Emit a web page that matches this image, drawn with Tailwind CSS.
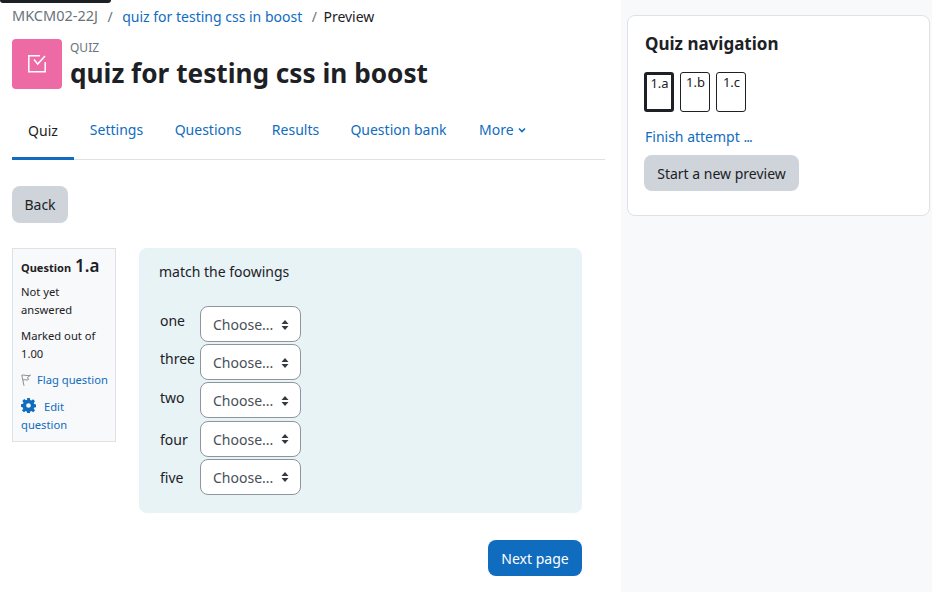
<!DOCTYPE html>
<html lang="en">
<head>
    <meta charset="UTF-8">
    <title>quiz for testing css in boost</title>
    <script src="https://cdn.jsdelivr.net/npm/@tailwindcss/browser@4"></script>
</head>

<body class="bg-white font-['Noto_Sans',sans-serif] text-[14px] text-[#1d2125] h-[592px] w-[932px] overflow-hidden flex relative">
    <div class="absolute left-0 top-0 w-[111px] h-[3px] bg-[#1d2125] rounded-b-[3px]"></div>

    <!-- Main column -->
    <div class="w-[621px] h-full pl-3 pr-4 flex flex-col shrink-0">
        <div class="h-[32px] mb-[2px] flex items-center gap-[9.500px]">
            <span class="text-[#6a737b] text-[14.5px]">MKCM02-22J</span>
            <span class="text-[#6a737b]">/</span>
            <a class="text-[#0f6cbf]">quiz for testing css in boost</a>
            <span class="text-[#6a737b]">/</span>
            <span class="-ml-[3px]">Preview</span>
        </div>

        <div class="flex gap-2 h-[50px] mt-[5px]">
            <div class="w-[50px] h-[50px] rounded-[4px] bg-[#ee6aa5] flex items-center justify-center">
                <svg class="w-[18px] h-[18px]" viewBox="0 0 18 18" fill="none" stroke="white" stroke-width="1.5">
                    <path d="M17.200 7V16.800H.8V.8H12" />
                    <path d="M6 4.500l3.700 4.500L17 1" />
                </svg>
            </div>
            <div class="mt-[2px]">
                <div class="text-[12px] leading-[14px] text-[#6a737b]">QUIZ</div>
                <h1 class="text-[26.200px] leading-[36px] font-bold whitespace-nowrap">quiz for testing css in boost</h1>
            </div>
        </div>

        <!-- Tabs -->
        <nav class="flex h-[56px] mt-[15px] border-b border-[#dee2e6] text-[#0f6cbf]">
            <a class="h-[56px] w-[62px] flex items-center justify-center text-[#1d2125] border-b-[3px] border-[#0f6cbf] pb-px">Quiz</a>
            <a class="h-[55px] w-[85px] pb-[4px] flex items-center justify-center">Settings</a>
            <a class="h-[55px] w-[98px] pb-[4px] flex items-center justify-center">Questions</a>
            <a class="h-[55px] w-[77px] pb-[4px] flex items-center justify-center">Results</a>
            <a class="h-[55px] w-[129px] pb-[4px] flex items-center justify-center">Question bank</a>
            <a class="h-[55px] ml-[16px] pb-[4px] flex items-center gap-1">More
                <svg class="w-2 h-2" viewBox="0 0 8 8" fill="none" stroke="#0f6cbf" stroke-width="1.6"><path d="M1 2.500l3 3 3-3" /></svg>
            </a>
        </nav>

        <button class="mt-[26px] w-[56px] h-[37px] rounded-lg bg-[#ced4da] self-start">Back</button>

        <div class="flex mt-[25px]">
            <!-- Question info -->
            <div class="w-[104px] h-[194px] shrink-0 bg-[#f8f9fa] border border-[#dee2e6] px-2 pt-2 text-[11.200px] leading-[17.500px]">
                <div class="font-bold text-[11px] flex items-baseline gap-1 h-[24px]">Question <span class="text-[17px] font-semibold">1.a</span></div>
                <div class="mt-[2px]">Not yet answered</div>
                <div class="mt-[9px]">Marked out of 1.00</div>
                <div class="mt-[9px] flex items-center gap-[6px] text-[#0f6cbf] whitespace-nowrap">
                    <svg class="w-[10px] h-[12px] shrink-0" viewBox="0 0 10 12" fill="none" stroke="#8a8f94" stroke-width="1"><path d="M3 11.800L.8 1.200C3.500 .5 6 2.500 9.500 1.200L6.500 3.500 7.500 5.500C5.500 6.800 3.800 5 1.800 6" /></svg>
                    Flag question
                </div>
                <div class="mt-[9px] leading-[18px] text-[#0f6cbf]">
                    <svg class="inline-block w-[15px] h-[15px] mr-2 align-[-2px]" viewBox="0 0 16 16" fill="#0f6cbf">
                        <path fill-rule="evenodd" d="M6.600 0h2.800l.4 2.200 1.200.5 1.900-1.300 2 2-1.300 1.900.5 1.200 2.200.4v2.800l-2.200.4-.5 1.200 1.300 1.900-2 2-1.900-1.300-1.200.5-.4 2.200H6.600l-.4-2.200-1.200-.5-1.900 1.300-2-2 1.300-1.900-.5-1.200L0 9.400V6.600l2.200-.4.5-1.200L1.400 3.100l2-2 1.900 1.300 1.200-.5zM8 5.500a2.500 2.500 0 1 0 0 5 2.500 2.500 0 0 0 0-5z" />
                    </svg>Edit question
                </div>
            </div>

            <!-- Question body -->
            <div class="ml-[23px] w-[443px] h-[265px] bg-[#e7f3f5] rounded-lg pl-5 pt-[14px]">
                <p class="leading-5">match the foowings</p>
                <div class="mt-[24px] flex flex-col gap-[2.200px]">
                    <div class="flex h-[36px]"><span class="w-[41px] pl-px pt-[4px]">one</span>
                        <div class="w-[101px] h-[36px] bg-white border border-[#8f959e] rounded-lg flex items-center pl-3 pt-px gap-[8px] text-[#495057]">Choose...<svg class="w-2 h-[10px]" viewBox="0 0 8 10" fill="#343a40"><path d="M4 0l3.500 4H.5zM4 10L.5 6h7z" /></svg></div>
                    </div>
                    <div class="flex h-[36px]"><span class="w-[41px] pl-px pt-[4px]">three</span>
                        <div class="w-[101px] h-[36px] bg-white border border-[#8f959e] rounded-lg flex items-center pl-3 pt-px gap-[8px] text-[#495057]">Choose...<svg class="w-2 h-[10px]" viewBox="0 0 8 10" fill="#343a40"><path d="M4 0l3.500 4H.5zM4 10L.5 6h7z" /></svg></div>
                    </div>
                    <div class="flex h-[36px]"><span class="w-[41px] pl-px pt-[5px]">two</span>
                        <div class="w-[101px] h-[36px] bg-white border border-[#8f959e] rounded-lg flex items-center pl-3 pt-px gap-[8px] text-[#495057]">Choose...<svg class="w-2 h-[10px]" viewBox="0 0 8 10" fill="#343a40"><path d="M4 0l3.500 4H.5zM4 10L.5 6h7z" /></svg></div>
                    </div>
                    <div class="flex h-[36px]"><span class="w-[41px] pl-px pt-[8px]">four</span>
                        <div class="w-[101px] h-[36px] bg-white border border-[#8f959e] rounded-lg flex items-center pl-3 pt-px gap-[8px] text-[#495057]">Choose...<svg class="w-2 h-[10px]" viewBox="0 0 8 10" fill="#343a40"><path d="M4 0l3.500 4H.5zM4 10L.5 6h7z" /></svg></div>
                    </div>
                    <div class="flex h-[36px]"><span class="w-[41px] pl-px pt-[8px]">five</span>
                        <div class="w-[101px] h-[36px] bg-white border border-[#8f959e] rounded-lg flex items-center pl-3 pt-px gap-[8px] text-[#495057]">Choose...<svg class="w-2 h-[10px]" viewBox="0 0 8 10" fill="#343a40"><path d="M4 0l3.500 4H.5zM4 10L.5 6h7z" /></svg></div>
                    </div>
                </div>
            </div>
        </div>

        <button class="mt-[27px] ml-[476px] w-[94px] h-[36px] pt-px rounded-lg bg-[#0f6cbf] text-white">Next page</button>
    </div>

    <!-- Side panel -->
    <div class="flex-1 h-full bg-[#f8f9fa] pl-[6px] pt-[15px]">
        <div class="w-[303px] h-[201px] bg-white border border-[#dee2e6] rounded-lg pl-4 pt-[16px]">
            <h2 class="text-[17px] leading-6 font-bold pl-px">Quiz navigation</h2>
            <div class="flex gap-[6px] mt-[17px] text-[13px] leading-[17px] text-center">
                <div class="w-[30px] h-[40px] border-[3px] border-[#1d2125] rounded-[3px] -mt-px pl-px">1.a</div>
                <div class="w-[30px] h-[40px] border border-[#1d2125] rounded-[3px] -mt-px pt-px pl-px">1.b</div>
                <div class="w-[30px] h-[40px] border border-[#1d2125] rounded-[3px] -mt-px pt-px pl-px">1.c</div>
            </div>
            <a class="block mt-[15px] leading-5 text-[#0f6cbf] pl-px">Finish attempt <span class="tracking-[-1px]">...</span></a>
            <button class="block mt-[8px] w-[155px] h-[36px] rounded-lg bg-[#ced4da]">Start a new preview</button>
        </div>
    </div>
</body>
</html>
